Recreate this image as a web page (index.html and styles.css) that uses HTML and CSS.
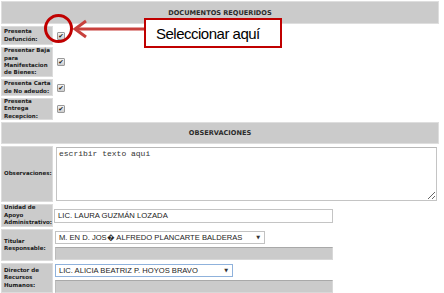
FILE: index.html
```html
<!DOCTYPE html>
<html lang="es">
<head>
<meta charset="utf-8">
<title>Documentos requeridos</title>
<link rel="stylesheet" href="styles.css">
</head>
<body>
<div class="page">
  <div class="form">
    <div class="head">DOCUMENTOS REQUERIDOS</div>

    <div class="label">Presenta Defunción:</div>
    <div class="value"><span class="check">✔</span></div>

    <div class="label">Presentar Baja para Manifestacion de Bienes:</div>
    <div class="value"><span class="check">✔</span></div>

    <div class="label">Presenta Carta de No adeudo:</div>
    <div class="value"><span class="check">✔</span></div>

    <div class="label">Presenta Entrega Recepcion:</div>
    <div class="value"><span class="check">✔</span></div>

    <div class="head">OBSERVACIONES</div>

    <div class="label">Observaciones:</div>
    <div class="value"><textarea class="obs">escribir texto aqui</textarea></div>

    <div class="label">Unidad de Apoyo Administrativo:</div>
    <div class="value"><input class="field" type="text" value="LIC. LAURA GUZMÁN LOZADA"></div>

    <div class="label">Titular Responsable:</div>
    <div class="value stack">
      <div class="select select-wide"><span class="sel-text">M. EN D. JOS&#xFFFD; ALFREDO PLANCARTE BALDERAS</span><span class="arrow">▼</span></div>
      <div class="disabled"></div>
    </div>

    <div class="label">Director de Recursos Humanos:</div>
    <div class="value stack">
      <div class="select select-narrow focus"><span class="sel-text">LIC. ALICIA BEATRIZ P. HOYOS BRAVO</span><span class="arrow">▼</span></div>
      <div class="disabled"></div>
    </div>
  </div>

  <svg class="mark" width="150" height="60" viewBox="0 0 150 60">
    <line x1="75" y1="29" x2="146" y2="29" stroke="#c8403c" stroke-width="3"/>
    <polyline points="86,21 75,29 86,37" fill="none" stroke="#c8403c" stroke-width="3" stroke-linejoin="miter"/>
    <circle cx="58.5" cy="28.5" r="13" fill="none" stroke="#c00000" stroke-width="3"/>
  </svg>
  <div class="callout">Seleccionar aquí</div>
</div>
</body>
</html>
```

FILE: styles.css
```css
* { box-sizing: border-box; }

html, body {
  margin: 0;
  padding: 0;
  background: #ffffff;
}

.page {
  position: relative;
  width: 444px;
  height: 293px;
  overflow: hidden;
}

.form {
  display: grid;
  width: 438px;
  margin-top: 1px;
  margin-left: 1px;
  grid-template-columns: 52px 1fr;
  grid-template-rows: 23px 19px 30px 17px 22px 22px 56px 23px 32px 30px;
  column-gap: 1px;
  row-gap: 2px;
  font-family: "DejaVu Sans", Verdana, sans-serif;
}

.head {
  grid-column: 1 / span 2;
  background: #cbcbcb;
  border: 1px solid #dedede;
  color: #2b2b2b;
  font-weight: bold;
  font-size: 6.6px;
  display: flex;
  align-items: center;
  justify-content: center;
}

.label {
  background: #cbcbcb;
  border: 1px solid #dcdcdc;
  color: #1a1a1a;
  font-weight: bold;
  font-size: 5.5px;
  line-height: 7.4px;
  padding: 0 0 0 2px;
  display: flex;
  align-items: center;
}

.value {
  display: flex;
  align-items: center;
}

.check {
  width: 8px;
  height: 8px;
  margin-left: 3px;
  border: 1px solid #9a9a9a;
  border-radius: 1px;
  background: linear-gradient(#f4f4f4, #cdcdcd);
  color: #1a1a1a;
  font-size: 6.5px;
  line-height: 6px;
  text-align: center;
  font-family: "DejaVu Sans", sans-serif;
}

.obs {
  display: block;
  width: 381px;
  height: 54px;
  margin: 0 0 0 2px;
  padding: 1px 2px;
  border: 1px solid #c4c4c4;
  border-top-color: #b8b8b8;
  background: #fff;
  color: #333;
  font-family: "Liberation Mono", "Courier New", monospace;
  font-size: 8px;
  line-height: 10px;
  resize: both;
  outline: none;
}

.field {
  width: 279px;
  height: 14px;
  margin: 0;
  padding: 0 3px;
  border: 1px solid #c4c4c4;
  background: #fff;
  color: #222;
  font-family: "Liberation Sans", Arial, sans-serif;
  font-size: 7.7px;
  outline: none;
}

.stack {
  flex-direction: column;
  align-items: flex-start;
  justify-content: center;
  gap: 3px;
  padding-left: 1px;
}

.select {
  height: 13px;
  display: flex;
  align-items: center;
  justify-content: space-between;
  padding: 0 4px 0 3px;
  border: 1px solid #c2c2c2;
  background: #fff;
  color: #222;
  font-family: "Liberation Sans", Arial, sans-serif;
  font-size: 7.6px;
  white-space: nowrap;
}

.select-wide { width: 210px; }
.select-narrow { width: 178px; }

.select.focus {
  border-color: #8fb2dc;
}

.arrow {
  font-size: 5px;
  color: #333;
  font-family: "DejaVu Sans", sans-serif;
}

.disabled {
  width: 278px;
  height: 13px;
  background: #cbcbcb;
  border-top: 1px solid #a9a9a9;
  border-left: 1px solid #bcbcbc;
  border-right: 1px solid #d8d8d8;
  border-bottom: 1px solid #d8d8d8;
}

.mark {
  position: absolute;
  left: 0;
  top: 0;
}

.callout {
  position: absolute;
  left: 144px;
  top: 18px;
  width: 138px;
  height: 30px;
  background: #fff;
  border: 2px solid #c00000;
  padding: 0 0 0 10px;
  display: flex;
  align-items: center;
  font-family: "Liberation Sans", Arial, sans-serif;
  font-size: 15px;
  letter-spacing: -0.5px;
  color: #000;
}
```
